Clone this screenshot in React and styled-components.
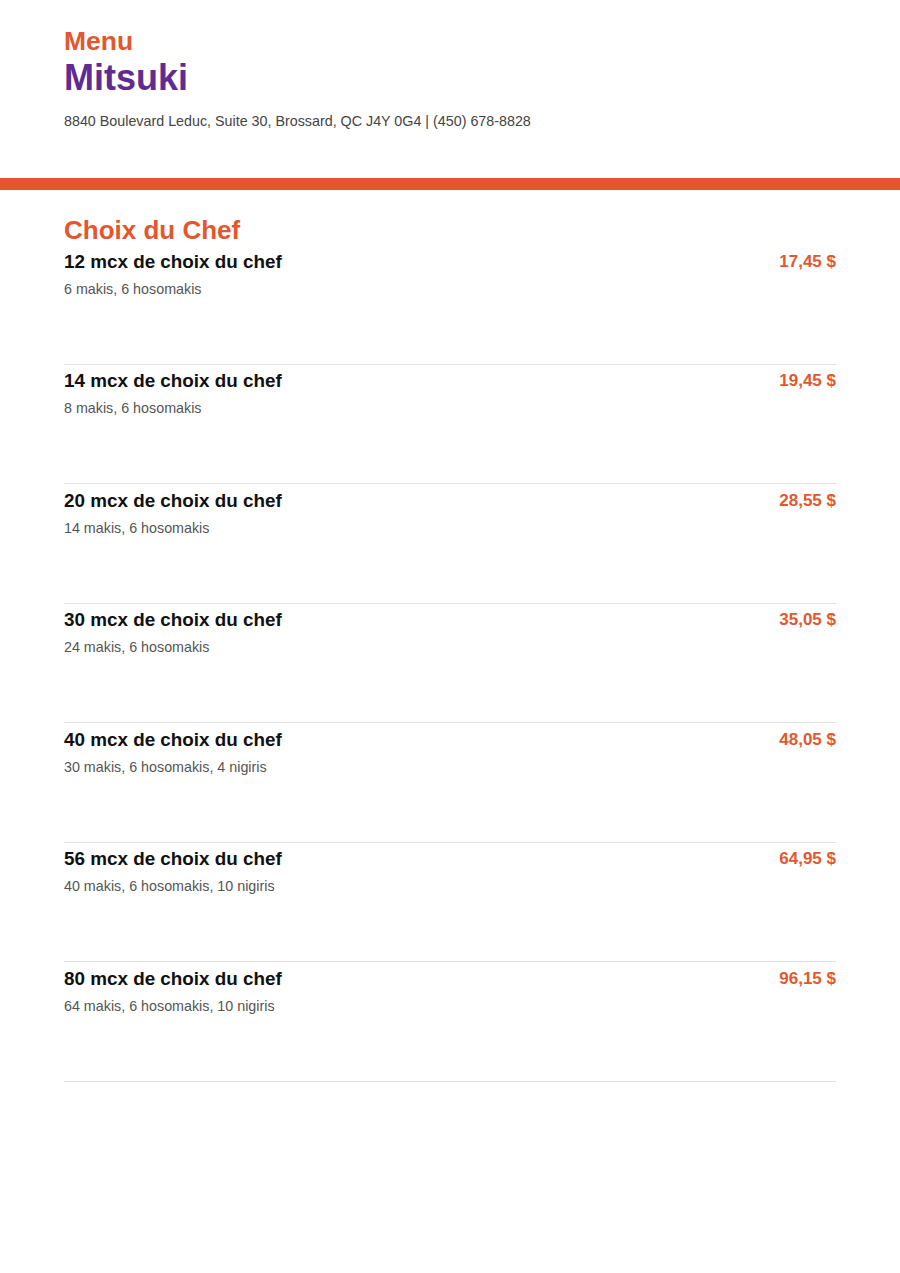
import React from "react";
import styled, { createGlobalStyle } from "styled-components";

const GlobalStyle = createGlobalStyle`
  body {
    margin: 0;
    background: #ffffff;
    font-family: "Liberation Sans", Arial, sans-serif;
  }
`;

const Header = styled.header`
  padding: 26px 64px 48px;
`;

const Kicker = styled.div`
  font-size: 26.5px;
  line-height: 30px;
  font-weight: 700;
  color: #e4572e;
`;

const Title = styled.h1`
  margin: 0;
  font-size: 36px;
  line-height: 44px;
  font-weight: 700;
  color: #5f2c91;
`;

const Address = styled.p`
  margin: 12px 0 0;
  font-size: 14.3px;
  line-height: 18px;
  color: #444;
`;

const Bar = styled.div`
  height: 12px;
  background: #e4572e;
`;

const Section = styled.section`
  padding: 25px 64px 0;
`;

const SectionTitle = styled.h2`
  margin: 0;
  font-size: 26px;
  line-height: 30px;
  font-weight: 700;
  color: #e4572e;
`;

const Item = styled.div`
  padding: 4.5px 0 66px;
  border-bottom: 1px solid #e3e3e3;
`;

const ItemHead = styled.div`
  display: flex;
  justify-content: space-between;
  align-items: center;
  line-height: 24px;
`;

const ItemName = styled.div`
  font-size: 18.85px;
  font-weight: 700;
  color: #111;
`;

const Price = styled.div`
  font-size: 17px;
  font-weight: 700;
  color: #e4572e;
`;

const Desc = styled.div`
  margin-top: 6px;
  font-size: 14.3px;
  line-height: 18px;
  color: #555;
`;

const items = [
  { name: "12 mcx de choix du chef", desc: "6 makis, 6 hosomakis", price: "17,45 $" },
  { name: "14 mcx de choix du chef", desc: "8 makis, 6 hosomakis", price: "19,45 $" },
  { name: "20 mcx de choix du chef", desc: "14 makis, 6 hosomakis", price: "28,55 $" },
  { name: "30 mcx de choix du chef", desc: "24 makis, 6 hosomakis", price: "35,05 $" },
  { name: "40 mcx de choix du chef", desc: "30 makis, 6 hosomakis, 4 nigiris", price: "48,05 $" },
  { name: "56 mcx de choix du chef", desc: "40 makis, 6 hosomakis, 10 nigiris", price: "64,95 $" },
  { name: "80 mcx de choix du chef", desc: "64 makis, 6 hosomakis, 10 nigiris", price: "96,15 $" },
];

export default function App() {
  return (
    <>
      <GlobalStyle />
      <Header>
        <Kicker>Menu</Kicker>
        <Title>Mitsuki</Title>
        <Address>8840 Boulevard Leduc, Suite 30, Brossard, QC J4Y 0G4 | (450) 678-8828</Address>
      </Header>
      <Bar />
      <Section>
        <SectionTitle>Choix du Chef</SectionTitle>
        {items.map((item) => (
          <Item key={item.name}>
            <ItemHead>
              <ItemName>{item.name}</ItemName>
              <Price>{item.price}</Price>
            </ItemHead>
            <Desc>{item.desc}</Desc>
          </Item>
        ))}
      </Section>
    </>
  );
}
